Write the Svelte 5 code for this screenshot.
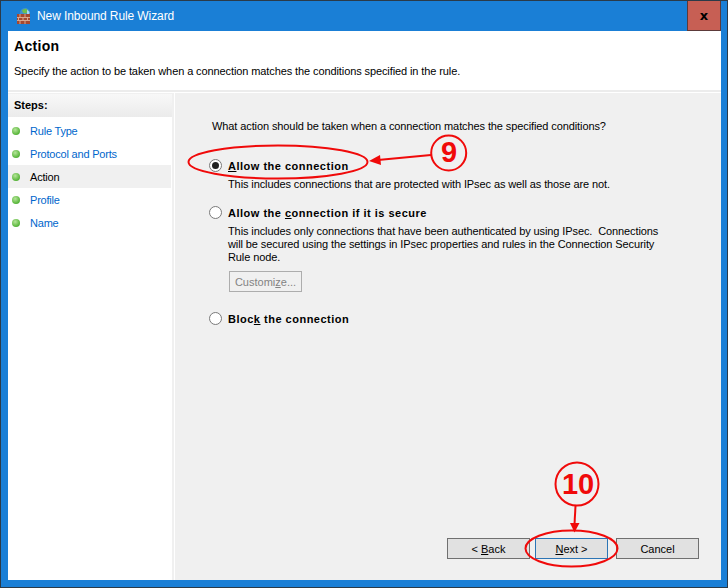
<script>
const steps = [
	{ label: "Rule Type" },
	{ label: "Protocol and Ports" },
	{ label: "Action", active: true },
	{ label: "Profile" },
	{ label: "Name" },
];
</script>

<div class="window">
  <div class="titlebar">
    <svg class="app-icon" width="16" height="16" viewBox="0 0 16 16">
      <circle cx="9" cy="5" r="5" fill="#3f8fd0" />
      <path d="M6 2 L10 0.500 L12.500 3 L10 5.500 L7 5 Z" fill="#6cc04f" />
      <path d="M11 1.500 L13.500 4 L13 7 L11 6 Z" fill="#a8d8f0" />
      <rect x="1" y="6" width="13" height="10" fill="#a5482f" />
      <path d="M1 9.500 H14 M1 12.500 H14 M4 6 V9.500 M9 6 V9.500 M2.500 9.500 V12.500 M7 9.500 V12.500 M11.500 9.500 V12.500 M4 12.500 V16 M9 12.500 V16" stroke="#d9a78e" stroke-width="1" fill="none" />
    </svg>
    <span class="title">New Inbound Rule Wizard</span>
    <div class="close"><span>x</span></div>
  </div>

  <div class="client">
    <div class="header">
      <h1>Action</h1>
      <p>Specify the action to be taken when a connection matches the conditions specified in the rule.</p>
    </div>

    <div class="body">
      <aside class="steps">
        <div class="steps-head">Steps:</div>
        <ul>
          {#each steps as s}
            <li class:active={s.active}>
              <i class="dot"></i>
              <span>{s.label}</span>
            </li>
          {/each}
        </ul>
      </aside>

      <main class="pane">
        <p class="question">What action should be taken when a connection matches the specified conditions?</p>

        <div class="options">
          <div class="option first">
            <div class="radio-row"><i class="radio checked"></i><b><u>A</u>llow the connection</b></div>
            <p>This includes connections that are protected with IPsec as well as those are not.</p>
          </div>

          <div class="option second">
            <div class="radio-row"><i class="radio"></i><b>Allow the <u>c</u>onnection if it is secure</b></div>
            <p>This includes only connections that have been authenticated by using IPsec.&nbsp; Connections<br />will be secured using the settings in IPsec properties and rules in the Connection Security<br />Rule node.</p>
            <button class="customize" disabled>Customi<u>z</u>e...</button>
          </div>

          <div class="option third">
            <div class="radio-row"><i class="radio"></i><b>Bloc<u>k</u> the connection</b></div>
          </div>
        </div>

        <div class="buttons">
          <button>&lt; <u>B</u>ack</button>
          <button class="default"><u>N</u>ext &gt;</button>
          <button class="cancel">Cancel</button>
        </div>
      </main>
    </div>
  </div>

  <svg class="marks" width="728" height="588" viewBox="0 0 728 588">
    <g fill="none" stroke="#f00a0a">
      <ellipse cx="278" cy="162" rx="89.500" ry="16.500" stroke-width="2" />
      <ellipse cx="571.500" cy="548.500" rx="46" ry="18" stroke-width="2" />
      <circle cx="448.700" cy="153" r="17.500" stroke-width="2" />
      <circle cx="577" cy="484" r="21.500" stroke-width="2" />
      <path d="M431 155 L378 160" stroke-width="2" />
      <path d="M575.500 506 L574.500 524" stroke-width="2" />
    </g>
    <path d="M369 161 L380 155 L381 165 Z" fill="#f00a0a" />
    <path d="M574.500 532.500 L570 523 L579.500 523 Z" fill="#f00a0a" />
    <text x="449" y="162" class="num">9</text>
    <text x="578" y="494" class="num">10</text>
  </svg>
</div>

<style>
  :global(body) { margin: 0; background: #1a7fd6; }
  .window {
    position: relative; width: 728px; height: 588px; box-sizing: border-box;
    background: #1a7fd6; border: 1px solid #2b3a48; overflow: hidden;
    font-family: "Liberation Sans", Arial, sans-serif; font-size: 11px; letter-spacing: -0.1px; color: #000;
    display: flex; flex-direction: column;
  }
  .titlebar { height: 30px; flex: none; display: flex; align-items: center; padding-left: 15px; position: relative; }
  .app-icon { margin-right: 5px; }
  .title { color: #fff; font-size: 12px; }
  .close {
    position: absolute; top: 0; right: 6px; width: 34px; height: 30px; box-sizing: border-box;
    background: #c75f54; border: 1px solid #5c3a3a; border-top: none;
    display: flex; align-items: center; justify-content: center;
    font: bold 13px "DejaVu Sans", sans-serif;
  }
  .client {
    flex: 1; margin: 0 6px 7px 7px; background: #fff; display: flex; flex-direction: column; min-height: 0;
  }
  .header { height: 61px; flex: none; padding: 6px 6px 0; box-sizing: border-box; border-bottom: 2px solid #ececec; }
  h1 { margin: 0; font-size: 14px; font-weight: 700; line-height: 18px; letter-spacing: 0.3px; }
  .header p { margin: 9px 0 0; line-height: 15px; }
  .body { flex: 1; display: flex; min-height: 0; padding-top: 1px; }
  .steps { width: 164px; flex: none; border-right: 2px solid #f0f0f0; border-top: 1px solid #f0f0f0; }
  .steps-head {
    height: 23px; line-height: 22px; padding-left: 6px; font-weight: 700; letter-spacing: 0;
    background: linear-gradient(#f8f8f8, #ebebeb);
  }
  ul { list-style: none; margin: 0; padding: 2px 0 0; letter-spacing: -0.2px; }
  li { height: 23px; display: flex; align-items: center; color: #0066cc; margin-right: 1px; }
  li.active { background: #f0f0f0; color: #000; }
  .dot {
    width: 8px; height: 8px; border-radius: 50%; margin: 0 10px 0 4px; flex: none;
    background: radial-gradient(circle at 40% 35%, #b6e59a, #5cb83e 65%, #3f9b2b);
  }
  .pane { flex: 1; margin-left: 1px; background: #f0f0f0; display: flex; flex-direction: column; padding: 26px 22px 0 37px; min-width: 0; }
  .question { margin: 0; line-height: 15px; }
  .options { margin-top: 24px; }
  .option p { margin: 0 0 0 16px; line-height: 13px; padding-top: 5px; }
  .second { margin-top: 14px; }
  .third { margin-top: 19px; }
  .radio-row { display: flex; align-items: center; margin-left: -3px; gap: 6px; height: 15px; }
  .radio {
    width: 11px; height: 11px; border-radius: 50%; border: 1px solid #7a7a7a; background: #fff; flex: none;
    display: flex; align-items: center; justify-content: center;
  }
  .radio.checked::after { content: ""; width: 7px; height: 7px; border-radius: 50%; background: #222; }
  b { font-weight: 700; letter-spacing: 0.5px; }
  button {
    font: inherit; box-sizing: border-box; height: 21px; width: 83px; padding: 0; margin: 0;
    background: #e1e1e1; border: 1px solid #707070; color: #000;
  }
  .customize {
    display: block; margin: 7px 0 0 17px; width: 73px; background: #f0f0f0; border-color: #adadad; color: #838383;
  }
  .buttons { margin-top: auto; display: flex; padding-bottom: 21px; justify-content: flex-end; }
  .default { width: 73px; border-color: #2c75b5; margin: 0 8px 0 5px; }
  .marks { position: absolute; left: -1px; top: -1px; pointer-events: none; }
  .num { fill: #f00a0a; font-family: "Liberation Sans", sans-serif; font-size: 29px; font-weight: 700; text-anchor: middle; }
</style>
